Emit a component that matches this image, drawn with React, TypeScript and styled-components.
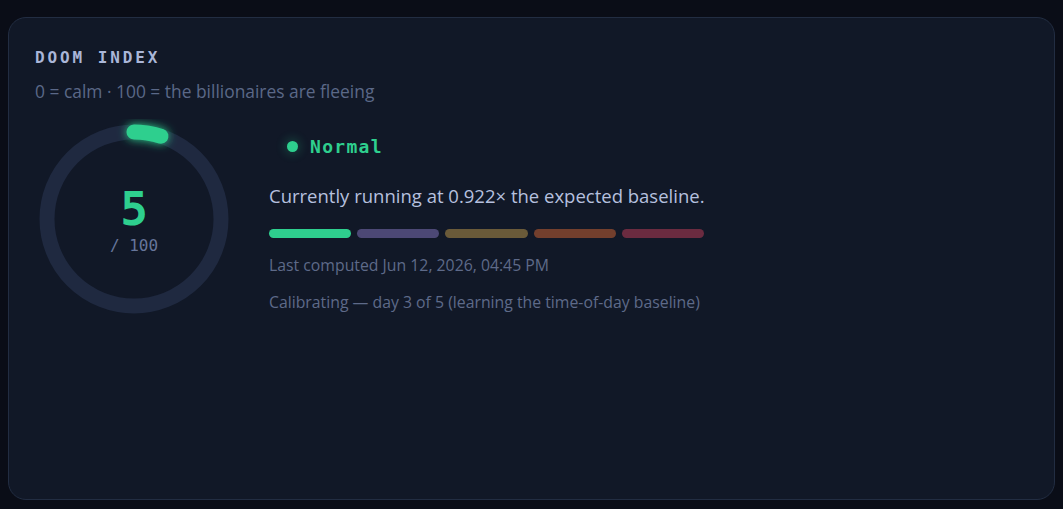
import React from 'react';
import styled, { createGlobalStyle } from 'styled-components';

const GlobalStyle = createGlobalStyle`
  html, body {
    margin: 0;
    padding: 0;
    background: #0a0d17;
  }
  body {
    font-family: "Open Sans", "Noto Sans", sans-serif;
  }
`;

const Page = styled.div`
  width: 1063px;
  height: 509px;
  padding: 17px 8px 9px;
  box-sizing: border-box;
`;

const Card = styled.section`
  height: 100%;
  box-sizing: border-box;
  background: #111827;
  border: 1px solid #222d42;
  border-radius: 18px;
  padding: 27px 26px;
`;

const Title = styled.h2`
  margin: 0;
  font-family: "DejaVu Sans Mono", monospace;
  font-size: 16px;
  font-weight: 700;
  letter-spacing: 2.9px;
  color: #aab6d8;
  line-height: 26px;
`;

const Subtitle = styled.p`
  margin: 8px 0 0;
  font-size: 17.4px;
  color: #5b6887;
  line-height: 24px;
`;

const Body = styled.div`
  display: flex;
  align-items: flex-start;
  gap: 35px;
  margin: 16px 0 0 -1px;
`;

const Gauge = styled.div`
  position: relative;
  width: 200px;
  height: 200px;
  flex-shrink: 0;
`;

const GaugeLabel = styled.div`
  position: absolute;
  inset: 0;
  display: flex;
  flex-direction: column;
  align-items: center;
  justify-content: center;
  padding-top: 3px;
  font-family: "DejaVu Sans Mono", monospace;
`;

const Score = styled.div<{ $color: string }>`
  font-size: 46px;
  font-weight: 700;
  line-height: 46px;
  color: ${({ $color }) => $color};
`;

const Max = styled.div`
  font-size: 16px;
  color: #66759a;
  line-height: 20px;
  margin-top: 4px;
`;

const Details = styled.div`
  display: flex;
  flex-direction: column;
  padding-top: 14px;
  width: 435px;
`;

const Badge = styled.div<{ $color: string }>`
  display: flex;
  align-items: center;
  gap: 12px;
  padding-left: 18px;
  height: 26px;
  font-family: "DejaVu Sans Mono", monospace;
  font-size: 18px;
  font-weight: 700;
  letter-spacing: 1.3px;
  color: ${({ $color }) => $color};
`;

const Dot = styled.span<{ $color: string }>`
  width: 11px;
  height: 11px;
  border-radius: 50%;
  background: ${({ $color }) => $color};
  box-shadow: 0 0 10px 3px ${({ $color }) => $color}33;
`;

const Summary = styled.p`
  margin: 24px 0 0;
  font-size: 18.5px;
  line-height: 26px;
  color: #b6c0df;
  white-space: nowrap;
`;

const Scale = styled.div`
  display: grid;
  grid-template-columns: repeat(5, 1fr);
  gap: 6px;
  margin-top: 20px;
`;

const Segment = styled.span<{ $color: string }>`
  height: 9px;
  border-radius: 5px;
  background: ${({ $color }) => $color};
`;

const Meta = styled.p<{ $gap: number }>`
  margin: ${({ $gap }) => $gap}px 0 0;
  font-size: 15.8px;
  line-height: 22px;
  color: #5e6a89;
  white-space: nowrap;
`;

const GREEN = '#2ecf8e';
const SEGMENTS = [GREEN, '#4c4875', '#6a5a39', '#733f2d', '#6b2b40'];

const RingGauge: React.FC<{ value: number }> = ({ value }) => {
  const r = 87;
  const c = 2 * Math.PI * r;
  const len = (value / 100) * c;
  return (
    <Gauge>
      <svg width="200" height="200" viewBox="0 0 200 200">
        <defs>
          <filter id="glow" x="-50%" y="-50%" width="200%" height="200%">
            <feGaussianBlur stdDeviation="5" result="b" />
            <feMerge>
              <feMergeNode in="b" />
              <feMergeNode in="SourceGraphic" />
            </feMerge>
          </filter>
        </defs>
        <circle cx="100" cy="100" r={r} fill="none" stroke="#1f2940" strokeWidth="15" />
        <circle
          cx="100"
          cy="100"
          r={r}
          fill="none"
          stroke={GREEN}
          strokeWidth="15"
          strokeLinecap="round"
          strokeDasharray={`${len} ${c}`}
          transform="rotate(-90 100 100)"
          filter="url(#glow)"
        />
      </svg>
      <GaugeLabel>
        <Score $color={GREEN}>{value}</Score>
        <Max>/ 100</Max>
      </GaugeLabel>
    </Gauge>
  );
};

export default function App() {
  return (
    <>
      <GlobalStyle />
      <Page>
        <Card>
          <Title>DOOM INDEX</Title>
          <Subtitle>0 = calm · 100 = the billionaires are fleeing</Subtitle>
          <Body>
            <RingGauge value={5} />
            <Details>
              <Badge $color={GREEN}>
                <Dot $color={GREEN} />
                Normal
              </Badge>
              <Summary>Currently running at 0.922× the expected baseline.</Summary>
              <Scale>
                {SEGMENTS.map((c) => (
                  <Segment key={c} $color={c} />
                ))}
              </Scale>
              <Meta $gap={16}>Last computed Jun 12, 2026, 04:45 PM</Meta>
              <Meta $gap={15}>Calibrating — day 3 of 5 (learning the time-of-day baseline)</Meta>
            </Details>
          </Body>
        </Card>
      </Page>
    </>
  );
}
